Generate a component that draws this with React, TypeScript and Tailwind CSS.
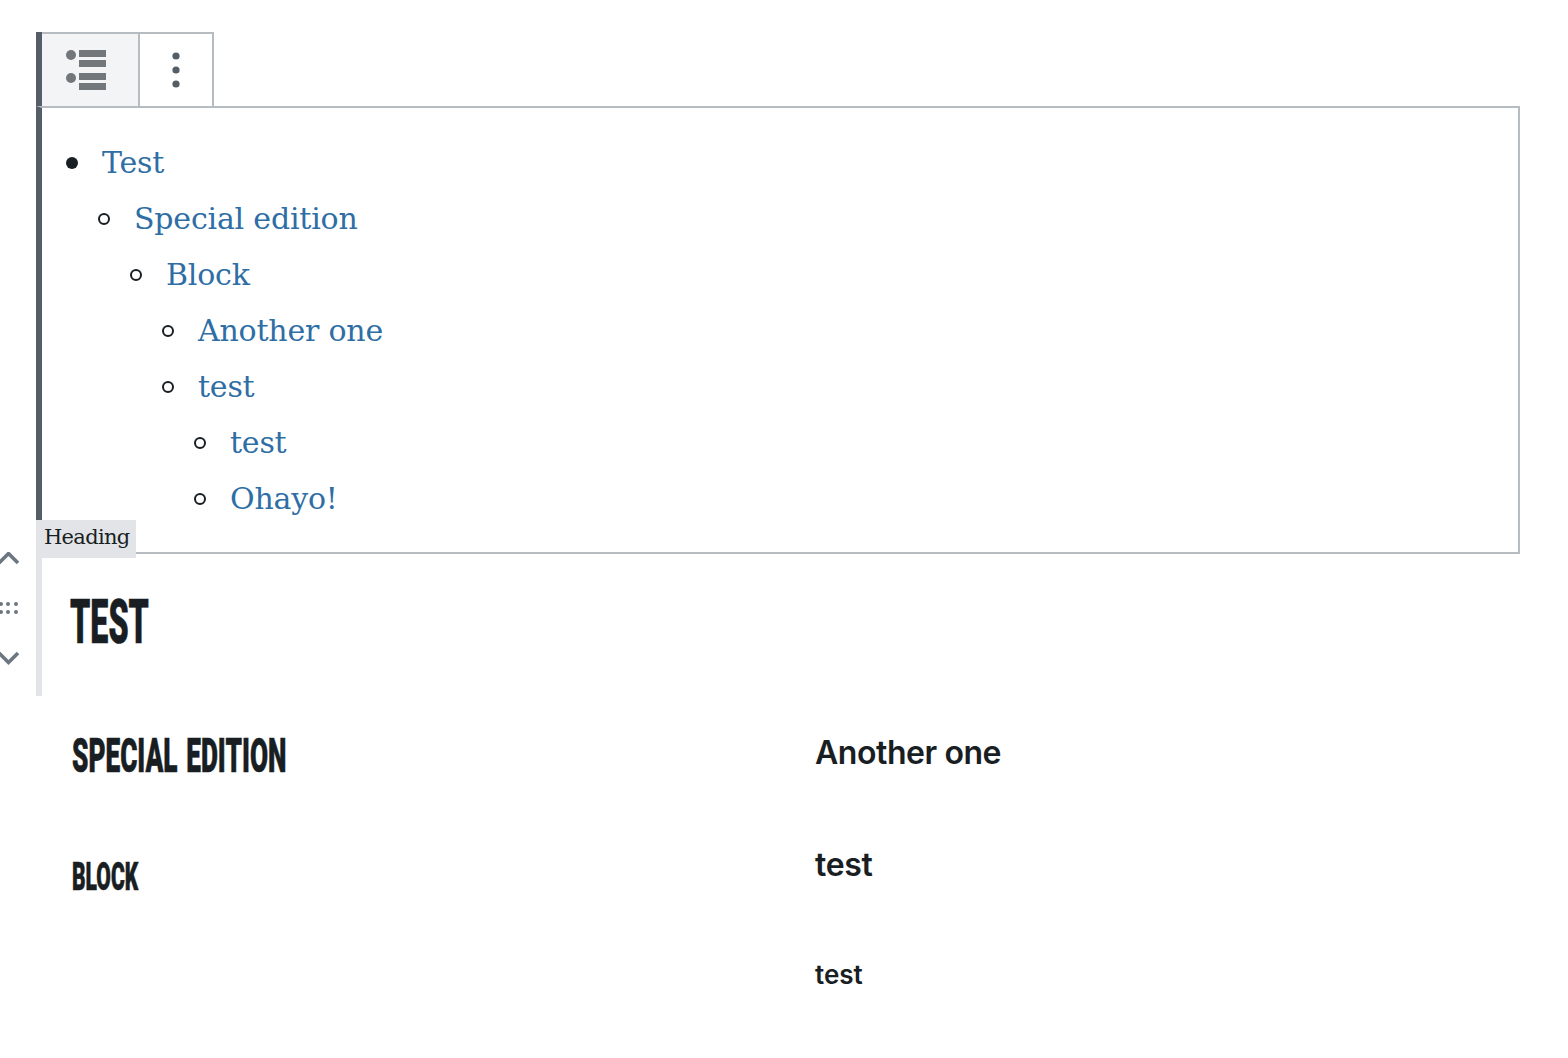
const serif = "font-['DejaVu_Serif',serif]";
const sans = "font-['Inter',sans-serif]";
const gothic =
  "font-['Roboto',sans-serif] font-black text-[#191e23] block origin-left whitespace-nowrap [-webkit-text-stroke:0.6px_#191e23]";

type Item = { label: string; children?: Item[] };

const items: Item[] = [
  {
    label: "Test",
    children: [
      {
        label: "Special edition",
        children: [
          {
            label: "Block",
            children: [
              { label: "Another one" },
              {
                label: "test",
                children: [{ label: "test" }, { label: "Ohayo!" }],
              },
            ],
          },
        ],
      },
    ],
  },
];

function ListIcon() {
  return (
    <svg width="42" height="42" viewBox="0 0 42 42" fill="#72777c">
      <circle cx="6" cy="6" r="5" />
      <rect x="14" y="1" width="27" height="7" />
      <rect x="14" y="11" width="27" height="7" />
      <circle cx="6" cy="29" r="5" />
      <rect x="14" y="24" width="27" height="7" />
      <rect x="14" y="34" width="27" height="7" />
    </svg>
  );
}

function MoreIcon() {
  return (
    <svg width="8" height="36" viewBox="0 0 8 36" fill="#555d66">
      <circle cx="4" cy="4" r="3.6" />
      <circle cx="4" cy="18" r="3.6" />
      <circle cx="4" cy="32" r="3.6" />
    </svg>
  );
}

function Mover() {
  return (
    <div className="absolute left-0 top-[552px]">
      <svg width="20" height="116" viewBox="0 0 20 116" fill="none">
        <path d="M-1 11 L8.5 1.5 L18 11" stroke="#6c7781" strokeWidth="3.6" />
        <g fill="#6c7781">
          <circle cx="1" cy="52" r="2" />
          <circle cx="8" cy="52" r="2" />
          <circle cx="16" cy="52" r="2" />
          <circle cx="1" cy="60" r="2" />
          <circle cx="8" cy="60" r="2" />
          <circle cx="16" cy="60" r="2" />
        </g>
        <path d="M-1 101 L8.5 110.5 L18 101" stroke="#6c7781" strokeWidth="3.6" />
      </svg>
    </div>
  );
}

function Tree({ nodes, top }: { nodes: Item[]; top?: boolean }) {
  return (
    <ul className={top ? "" : "pl-8"}>
      {nodes.map((node, i) => (
        <li key={i}>
          <div className="flex items-center h-14">
            <span
              className={
                top
                  ? "w-3 h-3 rounded-full bg-[#191e23] mr-6"
                  : "w-3 h-3 rounded-full border-2 border-[#191e23] mr-6"
              }
            />
            <a className="text-[#2e6ea5] text-[30px] tracking-[-0.2px] mb-[2px]" href="#">
              {node.label}
            </a>
          </div>
          {node.children && <Tree nodes={node.children} />}
        </li>
      ))}
    </ul>
  );
}

export default function App() {
  return (
    <div className={`relative min-h-[1058px] bg-white pl-9 pr-12 pt-8 ${serif}`}>
      <div className="flex h-[74px] border-l-[6px] border-[#555d66] w-[178px]">
        <div className="flex items-center justify-center w-[98px] pr-2 bg-[#f3f4f5] border-t-2 border-r-2 border-[#b5bcc2]">
          <ListIcon />
        </div>
        <div className="flex items-center justify-center w-[74px] border-t-2 border-r-2 border-[#b5bcc2]">
          <MoreIcon />
        </div>
      </div>

      <div className="relative h-[448px] border-2 border-l-[6px] border-[#b5bcc2] border-l-[#555d66] pl-6 pt-[27px]">
        <Tree nodes={items} top />
        <div className="absolute left-[-6px] top-[412px] w-[100px] h-[38px] bg-[#e2e4e7] pl-2 text-[#191e23] text-[21px] leading-[34px] tracking-[-0.7px]">
          Heading
        </div>
      </div>

      <div className="h-[142px] border-l-[6px] border-[#e2e4e7] pl-7 pt-8">
        <h1 className={`${gothic} text-[62px] leading-[72px] scale-x-[0.52]`}>TEST</h1>
      </div>

      <div className="grid grid-cols-[743px_1fr] pl-9">
        <div>
          <h2 className={`${gothic} text-[49px] leading-[60px] scale-x-[0.535] [word-spacing:4px] mt-[30px]`}>
            SPECIAL EDITION
          </h2>
          <h3 className={`${gothic} text-[39px] leading-[48px] scale-x-[0.54] mt-[67px]`}>BLOCK</h3>
        </div>
        <div className={`${sans} font-semibold text-[#191e23]`}>
          <h4 className="text-[32px] leading-10 tracking-[-0.45px] mt-[37px]">Another one</h4>
          <h5 className="text-[32px] leading-10 tracking-[-0.3px] mt-[72px]">test</h5>
          <h6 className="text-[26px] leading-8 mt-[74px]">test</h6>
        </div>
      </div>

      <Mover />
    </div>
  );
}
